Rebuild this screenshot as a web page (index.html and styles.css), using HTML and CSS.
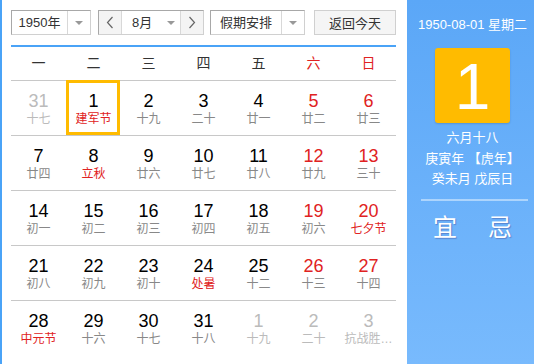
FILE: index.html
```html
<!DOCTYPE html>
<html lang="zh-CN">
<head>
    <meta charset="UTF-8">
    <title>万年历</title>
    <link rel="stylesheet" href="styles.css">
</head>
<body>
<div class="calendar">
    <div class="main">
        <div class="toolbar">
            <div class="select year-select">
                <span class="select-text">1950年</span>
                <span class="select-arrow"><i class="tri"></i></span>
            </div>
            <div class="select month-select">
                <span class="month-btn">
                    <svg width="8" height="13" viewBox="0 0 8 13"><path d="M6.5 1 L1.5 6.5 L6.5 12" fill="none" stroke="#666" stroke-width="1.2"/></svg>
                </span>
                <span class="month-text">8月<i class="tri"></i></span>
                <span class="month-btn">
                    <svg width="8" height="13" viewBox="0 0 8 13"><path d="M1.5 1 L6.5 6.5 L1.5 12" fill="none" stroke="#666" stroke-width="1.2"/></svg>
                </span>
            </div>
            <div class="select holiday-select">
                <span class="select-text">假期安排</span>
                <span class="select-arrow"><i class="tri"></i></span>
            </div>
            <button class="today-btn">返回今天</button>
        </div>

        <div class="week-head">
            <span>一</span><span>二</span><span>三</span><span>四</span><span>五</span>
            <span class="red">六</span><span class="red">日</span>
        </div>

        <div class="days">
            <div class="row">
                <div class="day other"><b>31</b><em>十七</em></div>
                <div class="day selected"><b>1</b><em class="fest">建军节</em></div>
                <div class="day"><b>2</b><em>十九</em></div>
                <div class="day"><b>3</b><em>二十</em></div>
                <div class="day"><b>4</b><em>廿一</em></div>
                <div class="day weekend"><b>5</b><em>廿二</em></div>
                <div class="day weekend"><b>6</b><em>廿三</em></div>
            </div>
            <div class="row">
                <div class="day"><b>7</b><em>廿四</em></div>
                <div class="day"><b>8</b><em class="fest">立秋</em></div>
                <div class="day"><b>9</b><em>廿六</em></div>
                <div class="day"><b>10</b><em>廿七</em></div>
                <div class="day"><b>11</b><em>廿八</em></div>
                <div class="day weekend"><b>12</b><em>廿九</em></div>
                <div class="day weekend"><b>13</b><em>三十</em></div>
            </div>
            <div class="row">
                <div class="day"><b>14</b><em>初一</em></div>
                <div class="day"><b>15</b><em>初二</em></div>
                <div class="day"><b>16</b><em>初三</em></div>
                <div class="day"><b>17</b><em>初四</em></div>
                <div class="day"><b>18</b><em>初五</em></div>
                <div class="day weekend"><b>19</b><em>初六</em></div>
                <div class="day weekend"><b>20</b><em class="fest">七夕节</em></div>
            </div>
            <div class="row">
                <div class="day"><b>21</b><em>初八</em></div>
                <div class="day"><b>22</b><em>初九</em></div>
                <div class="day"><b>23</b><em>初十</em></div>
                <div class="day"><b>24</b><em class="fest">处暑</em></div>
                <div class="day"><b>25</b><em>十二</em></div>
                <div class="day weekend"><b>26</b><em>十三</em></div>
                <div class="day weekend"><b>27</b><em>十四</em></div>
            </div>
            <div class="row">
                <div class="day"><b>28</b><em class="fest">中元节</em></div>
                <div class="day"><b>29</b><em>十六</em></div>
                <div class="day"><b>30</b><em>十七</em></div>
                <div class="day"><b>31</b><em>十八</em></div>
                <div class="day other"><b>1</b><em>十九</em></div>
                <div class="day other"><b>2</b><em>二十</em></div>
                <div class="day other"><b>3</b><em>抗战胜…</em></div>
            </div>
        </div>
    </div>

    <div class="side">
        <div class="side-date">1950-08-01 星期二</div>
        <div class="side-day">1</div>
        <div class="side-lunar">
            <p>六月十八</p>
            <p>庚寅年 【虎年】</p>
            <p>癸未月 戊辰日</p>
        </div>
        <div class="side-line"></div>
        <div class="side-yiji"><span>宜</span><span>忌</span></div>
    </div>
</div>
</body>
</html>
```

FILE: styles.css
```css
html, body {
    margin: 0;
    padding: 0;
}
body {
    font-family: "Liberation Sans", Arial, "Noto Sans CJK SC", sans-serif;
    background: #fff;
    color: #333;
}
.calendar {
    display: flex;
    width: 534px;
    height: 364px;
}

/* left part */
.main {
    width: 385px;
    padding: 10px 11px 0 9px;
    border-left: 2px solid #4aa3f7;
}
.toolbar {
    display: flex;
    align-items: flex-start;
    height: 25px;
    padding-bottom: 10px;
    border-bottom: 2px solid #4aa3f7;
}
.select {
    display: flex;
    height: 23px;
    border: 1px solid #d0d0d0;
    border-top-color: #a8a8a8;
    border-left-color: #a8a8a8;
    font-size: 13px;
    line-height: 23px;
    background: #fff;
}
.year-select {
    width: 78px;
}
.year-select .select-text {
    width: 55px;
    text-align: center;
}
.select-arrow {
    flex: 1;
    border-left: 1px solid #d8d8d8;
    display: flex;
    align-items: center;
    justify-content: center;
}
.tri {
    display: inline-block;
    width: 0;
    height: 0;
    border-left: 4px solid transparent;
    border-right: 4px solid transparent;
    border-top: 4px solid #999;
}
.month-select {
    width: 104px;
    margin-left: 7px;
}
.month-btn {
    width: 22px;
    display: flex;
    align-items: center;
    justify-content: center;
    background: #f4f4f4;
}
.month-btn:first-child {
    border-right: 1px solid #d8d8d8;
}
.month-btn:last-child {
    border-left: 1px solid #d8d8d8;
}
.month-text {
    flex: 1;
    display: flex;
    align-items: center;
    padding-left: 10px;
}
.month-text .tri {
    margin-left: 15px;
}
.holiday-select {
    width: 93px;
    margin-left: 6px;
}
.holiday-select .select-text {
    width: 70px;
    text-align: center;
}
.today-btn {
    margin-left: 9px;
    width: 82px;
    height: 25px;
    border: 1px solid #d0d0d0;
    background: #f5f5f5;
    color: #333;
    font-family: inherit;
    font-size: 13px;
    padding: 0;
    cursor: pointer;
}

.week-head {
    display: grid;
    grid-template-columns: repeat(7, 55px);
    height: 33px;
    line-height: 33px;
    border-bottom: 1px solid #c8c8c8;
    font-size: 14px;
    text-align: center;
    color: #333;
}
.red {
    color: #e02222;
}

.row {
    display: grid;
    grid-template-columns: repeat(7, 55px);
    border-bottom: 1px solid #c8c8c8;
}
.row:last-child {
    border-bottom: none;
}
.day {
    position: relative;
    height: 54px;
    padding-top: 11px;
    box-sizing: border-box;
    text-align: center;
}
.day b {
    display: block;
    font-weight: normal;
    font-size: 18px;
    line-height: 18px;
    color: #000;
}
.day em {
    display: block;
    font-style: normal;
    font-size: 12px;
    line-height: 18px;
    color: #888;
    white-space: nowrap;
}
.day.weekend b {
    color: #e02222;
}
.day em.fest {
    color: #e02222;
}
.day.other b,
.day.other em {
    color: #bbb;
}
.day.selected::after {
    content: "";
    position: absolute;
    top: -1px;
    left: 0;
    right: 1px;
    bottom: 0;
    border: 3px solid #ffbb00;
}

/* right part */
.side {
    width: 127px;
    background: linear-gradient(#5ba7f7, #78bafd);
    color: #fff;
    text-align: center;
    padding-left: 4px;
    box-sizing: border-box;
}
.side-date {
    margin-top: 17px;
    font-size: 13px;
    line-height: 16px;
}
.side-day {
    width: 75px;
    height: 75px;
    margin: 15px auto 0;
    background: #ffbb00;
    border-radius: 3px;
    font-size: 64px;
    line-height: 78px;
    box-shadow: 0 1px 2px rgba(0, 0, 0, 0.15);
}
.side-lunar {
    margin-top: 5px;
    font-size: 13px;
}
.side-lunar p {
    margin: 0;
    line-height: 20.5px;
}
.side-line {
    height: 2px;
    margin: 9px 6px 0 10px;
    background: rgba(255, 255, 255, 0.45);
}
.side-yiji {
    display: flex;
    justify-content: center;
    gap: 31px;
    margin-top: 13px;
    font-size: 24px;
    line-height: 28px;
    text-shadow: 1px 1px 1px rgba(60, 60, 140, 0.4);
}
```
